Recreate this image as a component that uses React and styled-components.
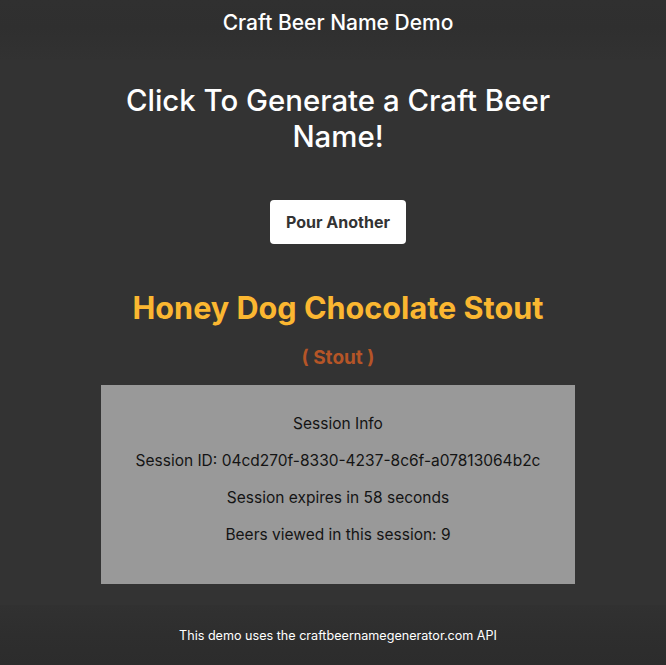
import React, { useState } from 'react';
import styled, { createGlobalStyle } from 'styled-components';

// Global styles
const GlobalStyle = createGlobalStyle`
  * {
    box-sizing: border-box;
  }

  body {
    margin: 0;
    padding: 0;
    font-family: 'Inter', 'Noto Sans', 'Liberation Sans', sans-serif;
    background-color: #333333;
    color: #ffffff;
    -webkit-font-smoothing: antialiased;
  }
`;

// the original page is centred a little right of the window middle
const SHIFT = '10px';

const Page = styled.div`
  display: flex;
  flex-direction: column;
  min-height: 100vh;
`;

const Header = styled.header`
  height: 60px;
  padding: 10px 0 0 ${SHIFT};
  background: linear-gradient(#303030, #2f2f2f 45%, #323232 100%);
  text-align: center;
`;

const HeaderTitle = styled.div`
  font-size: 21px;
  font-weight: 500;
  line-height: 26px;
`;

const Main = styled.main`
  flex: 1;
  display: flex;
  flex-direction: column;
  align-items: center;
  padding-left: ${SHIFT};
  text-align: center;
`;

const Heading = styled.h1`
  margin: 23px 0 0;
  max-width: 440px;
  font-size: 29.4px;
  font-weight: 500;
  line-height: 36px;
`;

const PourButton = styled.button`
  margin-top: 45px;
  width: 136px;
  height: 44px;
  border: none;
  border-radius: 4px;
  background: #ffffff;
  color: #333333;
  font-family: inherit;
  font-size: 16px;
  font-weight: 700;
  cursor: pointer;
`;

const BeerName = styled.h2`
  margin: 45px 0 0;
  font-size: 30.6px;
  font-weight: 700;
  line-height: 38px;
  color: ${(p) => p.$color};
`;

const BeerStyle = styled.div`
  margin-top: 20px;
  font-size: 19px;
  font-weight: 700;
  line-height: 22px;
  color: #b55527;
`;

const SessionPanel = styled.section`
  margin-top: 16px;
  width: 474px;
  padding: 12px 0 23px;
  background: #999999;
  color: #141414;
`;

const SessionLine = styled.p`
  margin: 16px 0;
  font-size: 15.5px;
  line-height: 21px;
`;

const Footer = styled.footer`
  height: 60px;
  display: flex;
  align-items: center;
  justify-content: center;
  padding-left: ${SHIFT};
  background: linear-gradient(#313131, #2e2e2e 50%, #2c2c2c 100%);
  font-size: 12.6px;
  color: #ffffff;
`;

function App() {
  const [beer] = useState({ name: 'Honey Dog Chocolate Stout', style: 'Stout' });
  const session = {
    id: '04cd270f-8330-4237-8c6f-a07813064b2c',
    expires: 58,
    viewed: 9
  };

  return (
    <Page>
      <GlobalStyle />
      <Header>
        <HeaderTitle>Craft Beer Name Demo</HeaderTitle>
      </Header>

      <Main>
        <Heading>Click To Generate a Craft Beer Name!</Heading>
        <PourButton>Pour Another</PourButton>

        <BeerName $color="#fbb731">{beer.name}</BeerName>
        <BeerStyle>( {beer.style} )</BeerStyle>

        <SessionPanel>
          <SessionLine>Session Info</SessionLine>
          <SessionLine>Session ID: {session.id}</SessionLine>
          <SessionLine>Session expires in {session.expires} seconds</SessionLine>
          <SessionLine>Beers viewed in this session: {session.viewed}</SessionLine>
        </SessionPanel>
      </Main>

      <Footer>This demo uses the craftbeernamegenerator.com API</Footer>
    </Page>
  );
}

export default App;
